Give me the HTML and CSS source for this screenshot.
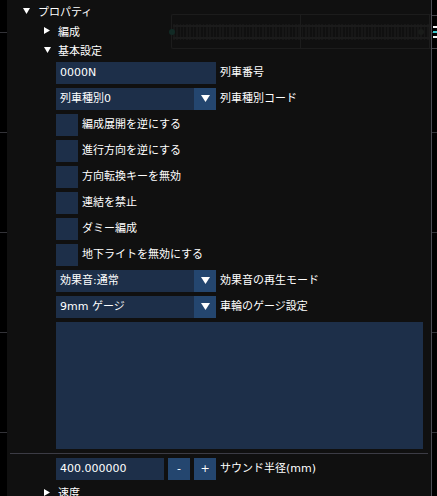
FILE: index.html
```html
<!DOCTYPE html>
<html lang="ja">
<head>
<meta charset="utf-8">
<title>プロパティ</title>
<link rel="stylesheet" href="styles.css">
</head>
<body>
<div class="canvas">
  <div class="ext ext-top"></div>
  <div class="ext ext-bottom"></div>
  <div class="marker marker-a"></div>
  <div class="marker marker-cyan"></div>
  <div class="marker marker-b"></div>
</div>
<div class="window">
  <div class="track">
    <div class="track-box"></div>
    <div class="ties"></div>
    <div class="rail rail-top"></div>
    <div class="rail rail-bottom"></div>
    <div class="divider divider-a"></div>
    <div class="divider divider-b"></div>
    <div class="node node-a"></div>
    <div class="node node-b"></div>
  </div>
  <div class="content">
    <div class="tree-row lv0">
      <svg class="arrow-down" viewBox="0 0 6 5"><polygon points="0,0 6,0 3,5"/></svg>
      <span class="tree-label">プロパティ</span>
    </div>
    <div class="tree-row lv1">
      <svg class="arrow-right" viewBox="0 0 6 7"><polygon points="0,0 6,3.5 0,7"/></svg>
      <span class="tree-label">編成</span>
    </div>
    <div class="tree-row lv1">
      <svg class="arrow-down" viewBox="0 0 6 5"><polygon points="0,0 6,0 3,5"/></svg>
      <span class="tree-label">基本設定</span>
    </div>
    <div class="fields">
      <div class="field">
        <div class="input wide">0000N</div>
        <span class="label">列車番号</span>
      </div>
      <div class="field">
        <div class="combo">
          <span class="combo-value">列車種別0</span>
          <span class="combo-btn"><svg viewBox="0 0 9 7"><polygon points="0,0 9,0 4.5,7"/></svg></span>
        </div>
        <span class="label">列車種別コード</span>
      </div>
      <div class="field"><span class="check"></span><span class="label">編成展開を逆にする</span></div>
      <div class="field"><span class="check"></span><span class="label">進行方向を逆にする</span></div>
      <div class="field"><span class="check"></span><span class="label">方向転換キーを無効</span></div>
      <div class="field"><span class="check"></span><span class="label">連結を禁止</span></div>
      <div class="field"><span class="check"></span><span class="label">ダミー編成</span></div>
      <div class="field"><span class="check"></span><span class="label">地下ライトを無効にする</span></div>
      <div class="field">
        <div class="combo">
          <span class="combo-value">効果音:通常</span>
          <span class="combo-btn"><svg viewBox="0 0 9 7"><polygon points="0,0 9,0 4.5,7"/></svg></span>
        </div>
        <span class="label">効果音の再生モード</span>
      </div>
      <div class="field">
        <div class="combo">
          <span class="combo-value">9mm ゲージ</span>
          <span class="combo-btn"><svg viewBox="0 0 9 7"><polygon points="0,0 9,0 4.5,7"/></svg></span>
        </div>
        <span class="label">車輪のゲージ設定</span>
      </div>
      <div class="textarea"></div>
    </div>
    <div class="separator"></div>
    <div class="fields">
      <div class="field">
        <div class="input narrow">400.000000</div>
        <span class="btn">-</span>
        <span class="btn">+</span>
        <span class="label">サウンド半径(mm)</span>
      </div>
    </div>
    <div class="tree-row lv1 last">
      <svg class="arrow-right" viewBox="0 0 6 7"><polygon points="0,0 6,3.5 0,7"/></svg>
      <span class="tree-label">速度</span>
    </div>
  </div>
</div>
</body>
</html>
```
FILE: styles.css
```css
* {
  box-sizing: border-box;
}

html, body {
  margin: 0;
  padding: 0;
}

body {
  width: 437px;
  height: 496px;
  overflow: hidden;
  position: relative;
  background-color: #000;
  background-image: repeating-linear-gradient(to bottom,
    transparent 0, transparent 32px,
    #333338 32px, #333338 33px,
    transparent 33px, transparent 100px);
  font-family: "DejaVu Sans", "Noto Sans CJK JP", sans-serif;
  font-size: 11px;
  color: #fff;
}

/* canvas behind the window */
.canvas {
  position: absolute;
  inset: 0;
  z-index: 0;
}

.ext {
  position: absolute;
  left: 432px;
  width: 5px;
  height: 1px;
  background: #45454a;
}

.ext-top { top: 15px; }
.ext-bottom { top: 48px; }

.marker {
  position: absolute;
  left: 433px;
  width: 4px;
}

.marker-a { top: 26px; height: 2px; background: #f0f0f0; }
.marker-cyan { top: 31px; height: 2px; background: #3cc8cc; }
.marker-b { top: 36px; height: 2px; background: #f0f0f0; }

/* ImGui window */
.window {
  position: relative;
  z-index: 1;
  margin-left: 7px;
  width: 425px;
  height: 496px;
  background: #101010;
  border-right: 1px solid #4a4a52;
  overflow: hidden;
}

.track {
  position: absolute;
  inset: 0;
  z-index: 0;
}

.track-box {
  position: absolute;
  left: 164px;
  top: 14px;
  width: 280px;
  height: 35px;
  border: 1px solid #1c1c1c;
  border-right: none;
  border-radius: 2px 0 0 2px;
}

.ties {
  position: absolute;
  left: 166px;
  top: 24px;
  width: 262px;
  height: 16px;
  background: repeating-linear-gradient(90deg,
    #171717 0, #171717 1.6px,
    transparent 1.6px, transparent 3.3px);
}

.rail {
  position: absolute;
  left: 166px;
  width: 262px;
  height: 2px;
  background: #1b1b1b;
}

.rail-top { top: 25px; }
.rail-bottom { top: 37px; }

.divider {
  position: absolute;
  top: 14px;
  width: 1px;
  height: 35px;
  background: #1c1c1c;
}

.divider-a { left: 293px; }
.divider-b { left: 422px; }

.node {
  position: absolute;
  width: 6px;
  height: 6px;
  border-radius: 50%;
}

.node-a { left: 162px; top: 29px; background: #122a25; }
.node-b { left: 411px; top: 29px; background: #1a1c1a; }

/* content */
.content {
  position: relative;
  z-index: 1;
  padding-top: 3.5px;
  display: flex;
  flex-direction: column;
}

.tree-row {
  height: 15px;
  margin-bottom: 4.5px;
  display: flex;
  align-items: center;
}

.tree-row svg {
  fill: #fff;
  flex: none;
}

.arrow-down {
  width: 7px;
  height: 6px;
  margin-top: -1px;
}

.arrow-right {
  width: 6px;
  height: 7px;
}

.lv0 { padding-left: 16px; }
.lv0 .tree-label { margin-left: 8px; }

.lv1 { padding-left: 37px; }
.lv1 .tree-label { margin-left: 8px; }

.lv1 .arrow-down + .tree-label { margin-left: 7px; }

.tree-row.last {
  margin-top: 4.5px;
}

.fields {
  margin-left: 49px;
  display: flex;
  flex-direction: column;
  gap: 4px;
}

.field {
  height: 22px;
  display: flex;
  align-items: center;
  gap: 4px;
}

.label {
  white-space: nowrap;
  line-height: 22px;
}

.input {
  height: 22px;
  line-height: 22px;
  padding-left: 4px;
  background: #1d2f49;
  white-space: nowrap;
}

.input.wide { width: 160px; }
.input.narrow { width: 108px; }

.combo {
  width: 160px;
  height: 22px;
  display: flex;
  background: #1d2f49;
}

.combo-value {
  flex: 1;
  padding-left: 4px;
  line-height: 22px;
  white-space: nowrap;
}

.combo-btn {
  width: 22px;
  height: 22px;
  background: #24466f;
  display: flex;
  align-items: center;
  justify-content: center;
}

.combo-btn svg {
  width: 9px;
  height: 7px;
  fill: #fff;
  margin-left: 1px;
  margin-top: -1px;
}

.check {
  width: 22px;
  height: 22px;
  background: #1d2f49;
  flex: none;
}

.textarea {
  width: 367px;
  height: 127px;
  background: #1d2f49;
}

.separator {
  margin: 4px 3px 4px 3px;
  width: 418px;
  height: 1px;
  background: #3c3c45;
}

.btn {
  width: 22px;
  height: 22px;
  line-height: 22px;
  text-align: center;
  background: #24466f;
  flex: none;
}
```
